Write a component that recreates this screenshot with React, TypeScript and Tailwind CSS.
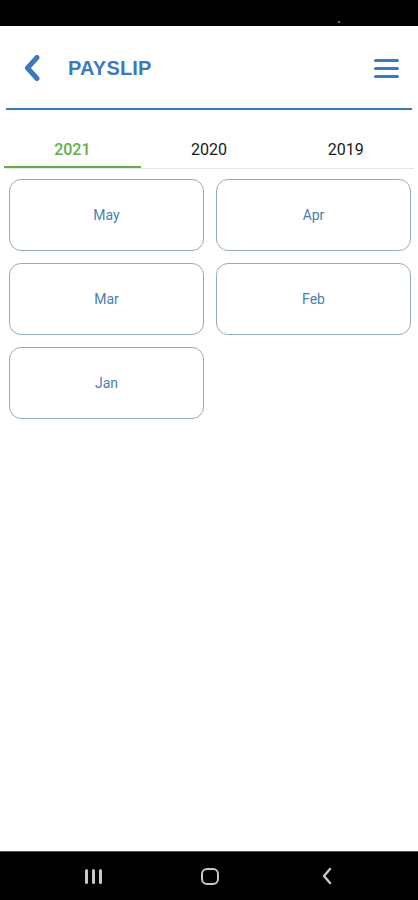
import React from "react";

const months = ["May", "Apr", "Mar", "Feb", "Jan"];

export default function App() {
  return (
    <div className="w-[418px] h-[900px] bg-white flex flex-col overflow-hidden" style={{ fontFamily: "Roboto, 'Liberation Sans', sans-serif" }}>
      <div className="h-[26px] bg-black shrink-0 flex justify-end items-end pr-[78px] pb-[3px]">
        <div className="w-[2px] h-[2px] bg-gray-500" />
      </div>
      <div className="mx-[6px] h-[84px] shrink-0 border-b-2 border-[#3b79bf] flex items-center">
        <svg width="22" height="28" viewBox="0 0 22 28" className="ml-[16px] mt-[2px]">
          <path d="M15 3.5 L5.5 14 L15 24.5" stroke="#3b79bf" strokeWidth="5" fill="none" strokeLinecap="round" strokeLinejoin="round" />
        </svg>
        <div className="ml-[24px] mt-[1px] text-[20px] font-bold text-[#3b79bf] tracking-[0.2px]" style={{ fontFamily: "'Liberation Sans', Arial, sans-serif" }}>PAYSLIP</div>
        <div className="ml-auto mr-[13px] flex flex-col gap-[5px] mt-[2px]">
          <div className="w-[25px] h-[3px] rounded-full bg-[#3b79bf]" />
          <div className="w-[25px] h-[3px] rounded-full bg-[#3b79bf]" />
          <div className="w-[25px] h-[3px] rounded-full bg-[#3b79bf]" />
        </div>
      </div>
      <div className="mx-[4px] mt-[21px] flex border-b border-[#e6e6e6] shrink-0">
        <div className="flex-1 h-[37px] flex items-start justify-center text-[16px] font-medium text-[#62ad46] border-b-2 border-[#62ad46] -mb-px pt-[7px]">2021</div>
        <div className="flex-1 h-[37px] flex items-start justify-center text-[16px] font-normal text-[#1a1a1a] pt-[7px]">2020</div>
        <div className="flex-1 h-[37px] flex items-start justify-center text-[16px] font-normal text-[#1a1a1a] pt-[7px]">2019</div>
      </div>
      <div className="ml-[9px] mr-[7px] mt-[10px] grid grid-cols-2 gap-x-[12px] gap-y-[12px]">
        {months.map((m) => (
          <div key={m} className="h-[72px] rounded-[12px] border border-[#97aabb] flex items-center justify-center text-[14px] text-[#4a7eb3]">
            {m}
          </div>
        ))}
      </div>
      <div className="flex-1" />
      <div className="h-[49px] bg-black border-t border-[#555] shrink-0 flex items-center">
        <div className="w-full flex items-center justify-center relative">
          <div className="absolute left-[85px] flex gap-[4px]">
            <div className="w-[3px] h-[15px] bg-[#c8c8c8] rounded-sm" />
            <div className="w-[3px] h-[15px] bg-[#c8c8c8] rounded-sm" />
            <div className="w-[3px] h-[15px] bg-[#c8c8c8] rounded-sm" />
          </div>
          <div className="absolute left-[201px] w-[18px] h-[17px] rounded-[6px] border-[2.5px] border-[#c8c8c8]" />
          <svg className="absolute left-[320px]" width="14" height="20" viewBox="0 0 14 20">
            <path d="M10 3 L4 10 L10 17" stroke="#c8c8c8" strokeWidth="2.4" fill="none" strokeLinecap="round" strokeLinejoin="round" />
          </svg>
          <div className="h-[20px]" />
        </div>
      </div>
    </div>
  );
}
